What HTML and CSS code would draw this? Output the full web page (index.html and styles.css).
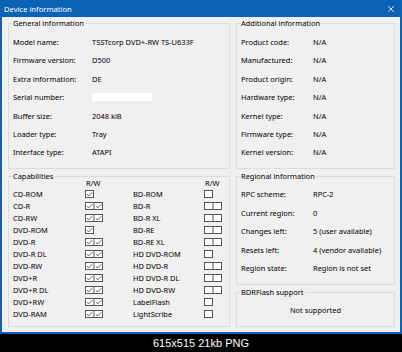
FILE: index.html
```html
<!DOCTYPE html>
<html>
<head>
<meta charset="utf-8">
<link rel="stylesheet" href="styles.css">
</head>
<body>
<svg class="defs" width="0" height="0">
  <symbol id="c1" viewBox="0 0 9 8"><rect x=".5" y=".5" width="8" height="7" class="bx"/><path d="M2 4.1l1.7 1.8L7.2 2.2" class="ck"/></symbol>
  <symbol id="e1" viewBox="0 0 9 8"><rect x=".5" y=".5" width="8" height="7" class="bx"/></symbol>
  <symbol id="c2" viewBox="0 0 18 8"><rect x=".5" y=".5" width="17" height="7" class="bx"/><path d="M9 .5v7" class="ln"/><path d="M2 4.1l1.7 1.8L7.2 2.2M11 4.1l1.7 1.8L16.2 2.2" class="ck"/></symbol>
  <symbol id="e2" viewBox="0 0 18 8"><rect x=".5" y=".5" width="17" height="7" class="bx"/><path d="M9 .5v7" class="ln"/></symbol>
</svg>
<div class="window">
  <div class="titlebar">
    <span class="title">Device information</span>
    <svg class="close" width="6" height="6" viewBox="0 0 6 6"><path d="M.3.3l5.4 5.4M5.7.3L.3 5.7"/></svg>
  </div>
  <div class="body">
    <section class="group">
      <div class="legend">General information</div>
      <dl class="rows rows-general">
        <dt>Model name:</dt><dd>TSSTcorp DVD+-RW TS-U633F</dd>
        <dt>Firmware version:</dt><dd>D500</dd>
        <dt>Extra information:</dt><dd>DE</dd>
        <dt>Serial number:</dt><dd><span class="serial"></span></dd>
        <dt>Buffer size:</dt><dd>2048 kiB</dd>
        <dt>Loader type:</dt><dd>Tray</dd>
        <dt>Interface type:</dt><dd>ATAPI</dd>
      </dl>
    </section>
    <section class="group">
      <div class="legend">Additional information</div>
      <dl class="rows rows-side">
        <dt>Product code:</dt><dd>N/A</dd>
        <dt>Manufactured:</dt><dd>N/A</dd>
        <dt>Product origin:</dt><dd>N/A</dd>
        <dt>Hardware type:</dt><dd>N/A</dd>
        <dt>Kernel type:</dt><dd>N/A</dd>
        <dt>Firmware type:</dt><dd>N/A</dd>
        <dt>Kernel version:</dt><dd>N/A</dd>
      </dl>
    </section>
    <section class="group">
      <div class="legend">Capabilities</div>
      <div class="caps">
        <span></span><span class="rw">R/W</span><span></span><span class="rw">R/W</span>
        <span>CD-ROM</span><svg class="s1"><use href="#c1"/></svg><span>BD-ROM</span><svg class="s1"><use href="#e1"/></svg>
        <span>CD-R</span><svg class="s2"><use href="#c2"/></svg><span>BD-R</span><svg class="s2"><use href="#e2"/></svg>
        <span>CD-RW</span><svg class="s2"><use href="#c2"/></svg><span>BD-R XL</span><svg class="s2"><use href="#e2"/></svg>
        <span>DVD-ROM</span><svg class="s1"><use href="#c1"/></svg><span>BD-RE</span><svg class="s2"><use href="#e2"/></svg>
        <span>DVD-R</span><svg class="s2"><use href="#c2"/></svg><span>BD-RE XL</span><svg class="s2"><use href="#e2"/></svg>
        <span>DVD-R DL</span><svg class="s2"><use href="#c2"/></svg><span>HD DVD-ROM</span><svg class="s1"><use href="#e1"/></svg>
        <span>DVD-RW</span><svg class="s2"><use href="#c2"/></svg><span>HD DVD-R</span><svg class="s2"><use href="#e2"/></svg>
        <span>DVD+R</span><svg class="s2"><use href="#c2"/></svg><span>HD DVD-R DL</span><svg class="s2"><use href="#e2"/></svg>
        <span>DVD+R DL</span><svg class="s2"><use href="#c2"/></svg><span>HD DVD-RW</span><svg class="s2"><use href="#e2"/></svg>
        <span>DVD+RW</span><svg class="s2"><use href="#c2"/></svg><span>LabelFlash</span><svg class="s1"><use href="#e1"/></svg>
        <span>DVD-RAM</span><svg class="s2"><use href="#c2"/></svg><span>LightScribe</span><svg class="s1"><use href="#e1"/></svg>
      </div>
    </section>
    <div class="stack">
      <section class="group regional">
        <div class="legend">Regional information</div>
        <dl class="rows rows-regional">
          <dt>RPC scheme:</dt><dd>RPC-2</dd>
          <dt>Current region:</dt><dd>0</dd>
          <dt>Changes left:</dt><dd>5 (user available)</dd>
          <dt>Resets left:</dt><dd>4 (vendor available)</dd>
          <dt>Region state:</dt><dd>Region is not set</dd>
        </dl>
      </section>
      <section class="group bdr">
        <div class="legend">BDRFlash support</div>
        <div class="bdr-text">Not supported</div>
      </section>
    </div>
  </div>
</div>
<div class="caption">615x515 21kb PNG</div>
</body>
</html>
```
FILE: styles.css
```css
* { box-sizing: border-box; }
html, body { margin: 0; padding: 0; }
body {
  background: #000;
  width: 402px;
  height: 352px;
  overflow: hidden;
  font-family: "Noto Sans", sans-serif;
  font-size: 7.45px;
  color: #000;
}
.defs { position: absolute; width: 0; height: 0; }
.bx { fill: #fcfcfc; stroke: #555; stroke-width: 1; }
.ln { stroke: #555; stroke-width: 1; }
.ck { fill: none; stroke: #444; stroke-width: .8; }

.window { width: 402px; height: 334px; display: flex; flex-direction: column; }
.titlebar {
  height: 17px;
  flex: none;
  background: #0b63b5;
  color: #fff;
  display: flex;
  align-items: center;
  justify-content: space-between;
  padding: 0 8px 0 4px;
}
.title { font-size: 7.6px; line-height: 10px; }
.close path { stroke: #fff; stroke-width: .9; }

.body {
  flex: 1;
  background: #f0f0f0;
  border: 2px solid #0b63b5;
  border-top: 0;
  padding: 6px 5px 5px 6px;
  display: grid;
  grid-template-columns: 222px 159px;
  grid-template-rows: 146px 151px;
  column-gap: 6px;
  row-gap: 7px;
}
.group { border: 1px solid #dcdcdc; min-height: 0; }
.legend {
  width: max-content;
  margin: -6px 0 0 3px;
  padding: 0 1px;
  background: #f0f0f0;
  line-height: 11px;
}
.rows {
  margin: 0;
  padding: 3.8px 0 0 4px;
  display: grid;
  grid-auto-rows: 18.4px;
  align-items: center;
  line-height: 10px;
}
.rows dt, .rows dd { margin: 0; white-space: nowrap; }
.rows-general { grid-template-columns: 79px auto; }
.rows-side, .rows-regional { grid-template-columns: 72px auto; }
.rows-regional { padding-top: 3.3px; }
.serial { display: block; width: 60px; height: 8px; background: #fff; }

.caps {
  display: grid;
  grid-template-columns: 72px 48px 71px auto;
  grid-template-rows: 10px;
  grid-auto-rows: 12px;
  align-items: center;
  padding-left: 4px;
  margin-top: -4px;
  line-height: 10px;
  white-space: nowrap;
}
.rw { padding-left: 1px; }
.s1 { width: 9px; height: 8px; display: block; }
.s2 { width: 18px; height: 8px; display: block; }

.stack { display: flex; flex-direction: column; gap: 7px; }
.regional { height: 109px; }
.bdr { height: 35px; }
.bdr-text { text-align: center; line-height: 10px; margin-top: 7px; }

.caption {
  height: 18px;
  color: #fff;
  text-align: center;
  font-family: "Liberation Sans", Arial, sans-serif;
  font-size: 11px;
  line-height: 18px;
}
```
